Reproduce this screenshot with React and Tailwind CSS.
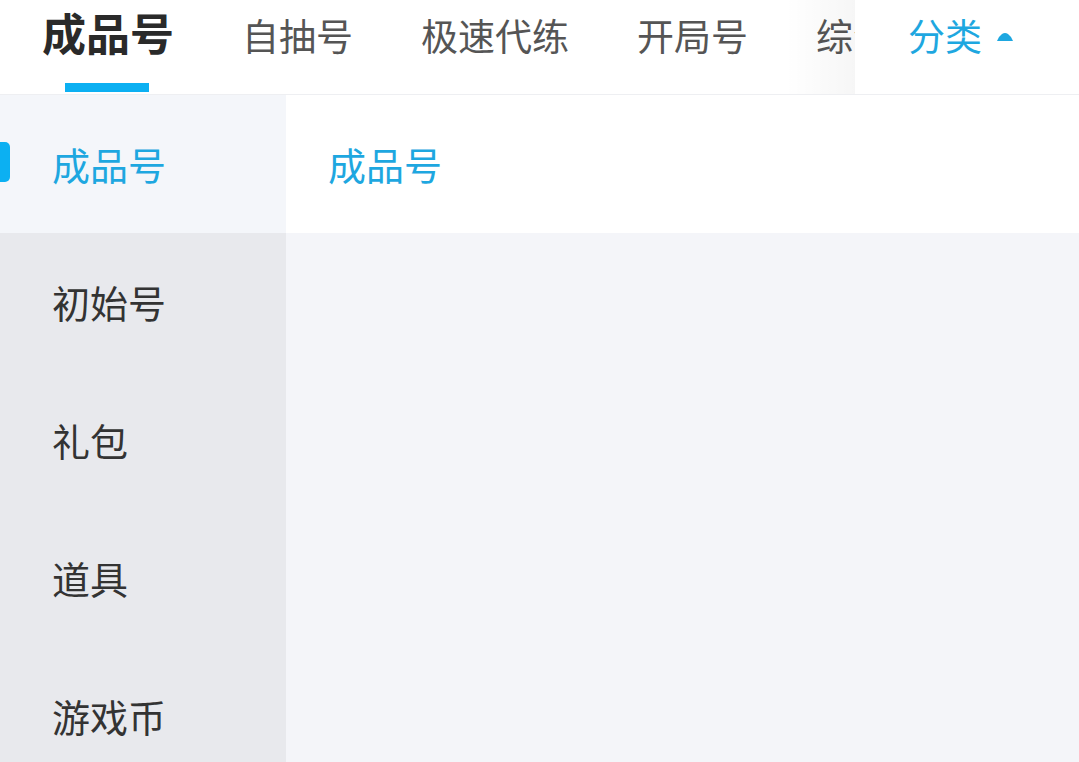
import { useState } from 'react';

const tabs = ['成品号', '自抽号', '极速代练', '开局号', '综合'];
const cats = ['成品号', '初始号', '礼包', '道具', '游戏币'];

const App = () => {
    const [tab, setTab] = useState(0);
    const [cat, setCat] = useState(0);

    return (
        <div
            className="w-[1079px] h-[762px] overflow-hidden bg-white flex flex-col"
            style={{ fontFamily: '"Noto Sans CJK SC", "Noto Sans", sans-serif' }}
        >
            {/* Top tabs */}
            <div className="h-[95px] shrink-0 flex items-stretch border-b border-[#eeeff2] bg-white">
                <div className="relative w-[855px] overflow-hidden flex items-stretch pl-[42px] gap-[68px]">
                    {tabs.map((t, i) => (
                        <button
                            key={t}
                            onClick={() => setTab(i)}
                            className={`relative shrink-0 flex items-start pt-[10px] leading-none ${
                                tab === i ? 'text-[44px] font-bold text-[#2a2a2a]' : 'text-[37px] text-[#555] pt-[17px]'
                            }`}
                        >
                            {t}
                            {tab === i && (
                                <span className="absolute left-[23px] top-[83px] w-[84px] h-[9px] bg-[#0cb0f2]" />
                            )}
                        </button>
                    ))}
                    <div className="absolute right-0 top-0 bottom-0 w-[70px] bg-gradient-to-r from-transparent to-black/[0.035] pointer-events-none" />
                </div>
                <div className="flex-1 flex items-start pt-[17px] pl-[53px] gap-[14px] text-[#1ea7e0]">
                    <span className="text-[37px] leading-none">分类</span>
                    <svg width="18" height="10" viewBox="0 0 18 10" className="mt-[15px]">
                        <path d="M1 9 Q2 5 6 2 Q9 0 12 2 Q16 5 17 9 Z" fill="#1ea7e0" />
                    </svg>
                </div>
            </div>

            {/* Body */}
            <div className="flex-1 flex min-h-0">
                <div className="w-[286px] shrink-0 bg-[#e8e9ed] flex flex-col">
                    {cats.map((c, i) => (
                        <button
                            key={c}
                            onClick={() => setCat(i)}
                            className={`relative h-[138px] shrink-0 flex items-center pl-[52px] text-[38px] leading-none text-left ${
                                cat === i ? 'bg-[#f4f6fa] text-[#1ea7e0]' : 'text-[#333]'
                            }`}
                        >
                            {cat === i && (
                                <span className="absolute left-0 top-[47px] w-[10px] h-[40px] rounded-r-[5px] bg-[#0cb0f2]" />
                            )}
                            {c}
                        </button>
                    ))}
                </div>
                <div className="flex-1 flex flex-col bg-[#f4f5f9]">
                    <div className="h-[138px] shrink-0 bg-white flex items-center pl-[42px] text-[38px] leading-none text-[#1ea7e0]">
                        {cats[cat]}
                    </div>
                </div>
            </div>
        </div>
    );
};

export default App;
